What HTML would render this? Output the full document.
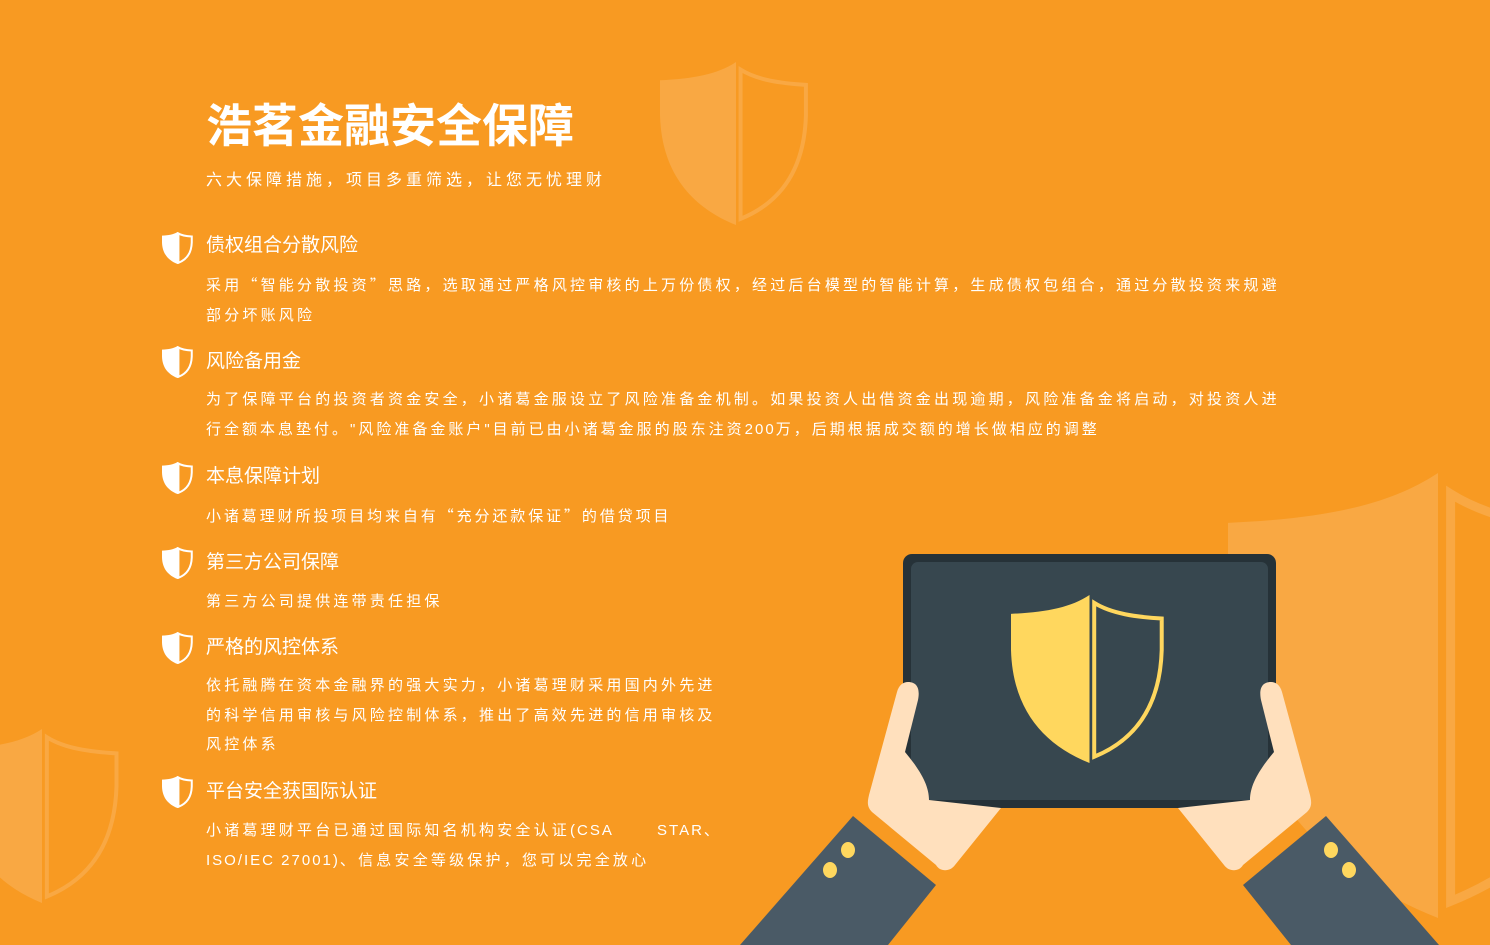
<!DOCTYPE html>
<html><head><meta charset="utf-8">
<style>
*{margin:0;padding:0;box-sizing:border-box}
body{width:1490px;height:945px;overflow:hidden;background:#F89A22;position:relative;font-family:"Liberation Sans","Noto Sans CJK SC",sans-serif;color:#fff}
svg.bg{position:absolute;left:0;top:0}
.t{position:absolute;white-space:nowrap}
.title{left:206px;top:98px;font-size:46px;font-weight:bold;line-height:56px}
.sub{left:206px;top:170px;font-size:16px;letter-spacing:4px;line-height:22px}
.h{left:206px;font-size:19px;line-height:26px}
.b{left:206px;font-size:15px;letter-spacing:3.2px;line-height:29.5px}
.q{font-family:"Noto Sans CJK SC",sans-serif}
.l{letter-spacing:2px}
</style></head><body>
<svg class="bg" width="1490" height="945" viewBox="0 0 1490 945">
<defs>
<symbol id="sh" viewBox="0 0 100 107" preserveAspectRatio="none">
<path d="M50,0 C38,8 22,11 0,12 L0,35 C1,72 20,95 50,107 Z" fill="currentColor" stroke="none"/>
<path d="M53,5 C64,12 80,14 96,15 L96,35 C95,70 80,92 53,103 Z" fill="none" stroke="currentColor" vector-effect="non-scaling-stroke"/>
</symbol>
</defs>
<g color="#F9A843" stroke-width="4">
<use href="#sh" x="660" y="62" width="152" height="163"/>
<use href="#sh" x="-39" y="729" width="162" height="174"/>
</g>
<g color="#F9A843" stroke-width="9">
<use href="#sh" x="1228" y="473" width="420" height="445"/>
</g>
<g color="#fff" stroke-width="2">
<use href="#sh" x="162" y="232" width="31" height="32"/>
<use href="#sh" x="162" y="346" width="31" height="32"/>
<use href="#sh" x="162" y="462" width="31" height="32"/>
<use href="#sh" x="162" y="547" width="31" height="32"/>
<use href="#sh" x="162" y="632" width="31" height="32"/>
<use href="#sh" x="162" y="776" width="31" height="32"/>
</g>
<rect x="903" y="554" width="373" height="254" rx="9" fill="#263238"/>
<rect x="911" y="562" width="357" height="238" rx="7" fill="#37474F"/>
<g color="#FFD75E" stroke-width="4">
<use href="#sh" x="1011" y="595" width="157" height="168"/>
</g>
<g id="hand">
<path d="M908,682 C918,682 920,690 918,700 L905,752 C920,770 929,785 929,800 L1001,808 L955,865 C950,872 940,872 936,865 L872,812 C866,806 868,800 869,795 L897,692 C899,685 903,682 908,682 Z" fill="#FFE0BD"/>
<path d="M853,816 L936,885 L888,945 L740,945 Z" fill="#4A5A66"/>
<ellipse cx="848" cy="850" rx="7" ry="8" fill="#FFD75E"/>
<ellipse cx="830" cy="870" rx="7" ry="8" fill="#FFD75E"/>
</g>
<use href="#hand" transform="translate(2179,0) scale(-1,1)"/>
</svg>
<div class="t title">浩茗金融安全保障</div>
<div class="t sub">六大保障措施，项目多重筛选，让您无忧理财</div>
<div class="t h" style="top:233px">债权组合分散风险</div>
<div class="t b" style="top:270px">采用<span class="q">“</span>智能分散投资<span class="q">”</span>思路，选取通过严格风控审核的上万份债权，经过后台模型的智能计算，生成债权包组合，通过分散投资来规避<br>部分坏账风险</div>
<div class="t h" style="top:349px">风险备用金</div>
<div class="t b" style="top:385px">为了保障平台的投资者资金安全，小诸葛金服设立了风险准备金机制。如果投资人出借资金出现逾期，风险准备金将启动，对投资人进<br><span style="letter-spacing:3px">行全额本息垫付。"风险准备金账户"目前已由小诸葛金服的股东注资<span class="l">200</span>万，后期根据成交额的增长做相应的调整</span></div>
<div class="t h" style="top:464px">本息保障计划</div>
<div class="t b" style="top:501px;letter-spacing:2.9px">小诸葛理财所投项目均来自有<span class="q">“</span>充分还款保证<span class="q">”</span>的借贷项目</div>
<div class="t h" style="top:550px">第三方公司保障</div>
<div class="t b" style="top:587px">第三方公司提供连带责任担保</div>
<div class="t h" style="top:635px">严格的风控体系</div>
<div class="t b" style="top:671px">依托融腾在资本金融界的强大实力，小诸葛理财采用国内外先进<br>的科学信用审核与风险控制体系，推出了高效先进的信用审核及<br>风控体系</div>
<div class="t h" style="top:779px">平台安全获国际认证</div>
<div class="t b" style="top:816px">小诸葛理财平台已通过国际知名机构安全认证<span class="l">(CSA&nbsp;&nbsp;&nbsp;&nbsp;&nbsp;&nbsp;&nbsp;STAR</span>、<br><span class="l">ISO/IEC 27001)</span>、信息安全等级保护，您可以完全放心</div>
</body></html>
